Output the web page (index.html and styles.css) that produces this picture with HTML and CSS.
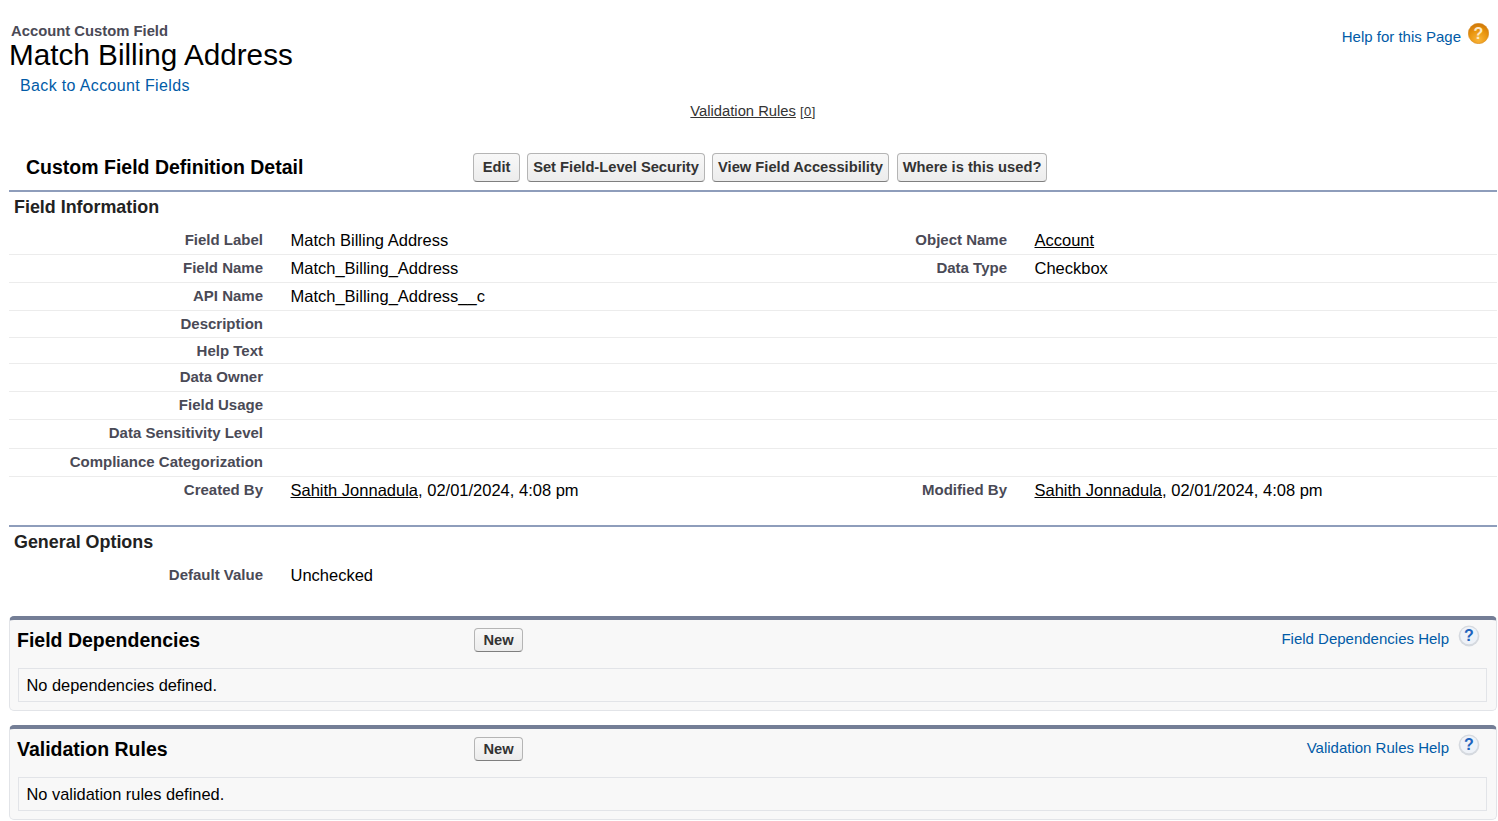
FILE: index.html
```html
<!DOCTYPE html>
<html lang="en">
<head>
    <meta charset="UTF-8">
    <title>Match Billing Address</title>
    <link rel="stylesheet" href="styles.css">
</head>
<body>

<div class="page-header">
    <div class="page-titles">
        <div class="page-type">Account Custom Field</div>
        <h1 class="page-name">Match Billing Address</h1>
        <a class="back-link" href="#">Back to Account Fields</a>
    </div>
    <a class="help-link" href="#">Help for this Page
        <svg class="help-icon" width="21" height="21" viewBox="0 0 21 21">
            <defs>
                <radialGradient id="orange" cx="0.5" cy="0.8" r="0.75">
                    <stop offset="0" stop-color="#f9b53a"/>
                    <stop offset="0.6" stop-color="#e9950f"/>
                    <stop offset="1" stop-color="#d27a08"/>
                </radialGradient>
            </defs>
            <circle cx="10.5" cy="10.5" r="10.2" fill="url(#orange)" stroke="#d98a1e" stroke-width="0.6"/>
            <text x="10.5" y="16" text-anchor="middle" class="help-mark orange-mark">?</text>
        </svg>
    </a>
</div>

<div class="related-links">
    <a href="#">Validation Rules</a> <span class="count">[<u>0</u>]</span>
</div>

<div class="detail-header">
    <h2 class="detail-title">Custom Field Definition Detail</h2>
    <div class="detail-buttons">
        <button class="btn btn-edit">Edit</button>
        <button class="btn btn-security">Set Field-Level Security</button>
        <button class="btn btn-access">View Field Accessibility</button>
        <button class="btn btn-used">Where is this used?</button>
    </div>
</div>

<div class="section first-section">
    <h3 class="section-title">Field Information</h3>
    <div class="field-rows">
        <div class="row h28"><div class="lbl">Field Label</div><div class="val">Match Billing Address</div><div class="lbl">Object Name</div><div class="val"><a href="#">Account</a></div></div>
        <div class="row h28"><div class="lbl">Field Name</div><div class="val">Match_Billing_Address</div><div class="lbl">Data Type</div><div class="val">Checkbox</div></div>
        <div class="row h28"><div class="lbl">API Name</div><div class="val">Match_Billing_Address__c</div><div class="lbl"></div><div class="val"></div></div>
        <div class="row h27"><div class="lbl">Description</div><div class="val"></div><div class="lbl"></div><div class="val"></div></div>
        <div class="row h26"><div class="lbl">Help Text</div><div class="val"></div><div class="lbl"></div><div class="val"></div></div>
        <div class="row h28"><div class="lbl">Data Owner</div><div class="val"></div><div class="lbl"></div><div class="val"></div></div>
        <div class="row h28"><div class="lbl">Field Usage</div><div class="val"></div><div class="lbl"></div><div class="val"></div></div>
        <div class="row h29"><div class="lbl">Data Sensitivity Level</div><div class="val"></div><div class="lbl"></div><div class="val"></div></div>
        <div class="row h28"><div class="lbl">Compliance Categorization</div><div class="val"></div><div class="lbl"></div><div class="val"></div></div>
        <div class="row h28 last"><div class="lbl">Created By</div><div class="val"><a href="#">Sahith Jonnadula</a>, 02/01/2024, 4:08 pm</div><div class="lbl">Modified By</div><div class="val"><a href="#">Sahith Jonnadula</a>, 02/01/2024, 4:08 pm</div></div>
    </div>
</div>

<div class="section second-section">
    <h3 class="section-title">General Options</h3>
    <div class="field-rows">
        <div class="row h28 last"><div class="lbl">Default Value</div><div class="val">Unchecked</div><div class="lbl"></div><div class="val"></div></div>
    </div>
</div>

<div class="list-block">
    <div class="list-head">
        <h3 class="list-title">Field Dependencies</h3>
        <button class="btn btn-new">New</button>
        <a class="list-help" href="#">Field Dependencies Help
            <svg class="q-icon" width="22" height="22" viewBox="0 0 22 22">
                <circle cx="11" cy="11" r="10.4" fill="#d5d9df"/>
                <circle cx="11" cy="10.5" r="8.8" fill="#eef2f8"/>
                <text x="11" y="16" text-anchor="middle" class="help-mark blue-mark">?</text>
            </svg>
        </a>
    </div>
    <div class="list-body">No dependencies defined.</div>
</div>

<div class="list-block">
    <div class="list-head">
        <h3 class="list-title">Validation Rules</h3>
        <button class="btn btn-new">New</button>
        <a class="list-help" href="#">Validation Rules Help
            <svg class="q-icon" width="22" height="22" viewBox="0 0 22 22">
                <circle cx="11" cy="11" r="10.4" fill="#d5d9df"/>
                <circle cx="11" cy="10.5" r="8.8" fill="#eef2f8"/>
                <text x="11" y="16" text-anchor="middle" class="help-mark blue-mark">?</text>
            </svg>
        </a>
    </div>
    <div class="list-body">No validation rules defined.</div>
</div>

</body>
</html>
```

FILE: styles.css
```css
body {
    margin: 0;
    padding: 0 1px 0 9px;
    font-family: "Liberation Sans", Arial, sans-serif;
    font-size: 16px;
    color: #000;
    background: #fff;
    overflow: hidden;
}
a {
    color: #000;
}
h1, h2, h3 {
    margin: 0;
}
.page-header {
    display: flex;
    justify-content: space-between;
    align-items: flex-start;
    padding-top: 23px;
    height: 71px;
}
.page-type {
    font-size: 14.8px;
    font-weight: bold;
    line-height: 17px;
    margin-left: 2px;
    color: #4a4a56;
}
.page-name {
    margin-top: -1px;
    font-size: 29.7px;
    font-weight: normal;
    line-height: 32px;
}
.back-link {
    display: block;
    margin: 5px 0 0 11px;
    font-size: 16px;
    line-height: 20px;
    letter-spacing: 0.36px;
    color: #015ba7;
    text-decoration: none;
}
.help-link {
    display: flex;
    align-items: center;
    gap: 7px;
    margin-right: 8px;
    font-size: 15px;
    color: #015ba7;
    text-decoration: none;
}
.help-icon {
    margin-bottom: 6px;
}
.help-mark {
    font-family: "Liberation Sans", Arial, sans-serif;
    font-weight: bold;
    font-size: 16px;
}
.orange-mark {
    fill: #fde9c6;
}
.blue-mark {
    fill: #1f63bd;
}
.related-links {
    text-align: center;
    font-size: 14.75px;
    line-height: 18px;
    margin-top: 8px;
    color: #333;
}
.related-links a {
    color: #333;
}
.count {
    font-size: 13px;
    letter-spacing: 0.4px;
}
.detail-header {
    display: flex;
    align-items: center;
    margin-top: 24px;
    border-bottom: 2px solid #8e9dbb;
    height: 45px;
    padding-left: 17px;
}
.detail-title {
    width: 447px;
    font-size: 19.5px;
    font-weight: bold;
}
.detail-buttons {
    display: flex;
    gap: 7px;
}
.btn {
    height: 29px;
    padding: 0 0 2px;
    font-family: "Liberation Sans", Arial, sans-serif;
    font-size: 14.7px;
    font-weight: bold;
    color: #333;
    background: linear-gradient(#f8f8f8, #ececec);
    border: 1px solid #b5b5b5;
    border-bottom-color: #7f7f7f;
    border-radius: 4px;
    white-space: nowrap;
}
.btn-edit { width: 47px; }
.btn-security { width: 178px; }
.btn-access { width: 177px; margin-right: 1px; }
.btn-used { width: 150px; }
.btn-new {
    width: 49px;
    height: 24px;
    padding: 0;
}
.section-title {
    font-size: 17.9px;
    font-weight: bold;
    line-height: 22px;
    padding-left: 5px;
    color: #222;
}
.first-section {
    padding-top: 4px;
}
.first-section .section-title {
    margin-bottom: 9px;
}
.row {
    display: grid;
    grid-template-columns: 254px 490px 254px 1fr;
    box-sizing: border-box;
    border-bottom: 1px solid #ececec;
}
.row.last {
    border-bottom: none;
}
.h26 { height: 26px; }
.h27 { height: 27px; }
.h28 { height: 28px; }
.h29 { height: 29px; }
.lbl {
    text-align: right;
    font-size: 15px;
    font-weight: bold;
    color: #4a4a56;
    line-height: 25px;
}
.val {
    padding-left: 27.5px;
    font-size: 16.5px;
    line-height: 26px;
}
.second-section {
    margin-top: 20px;
    border-top: 2px solid #8e9dbb;
    padding-top: 4px;
    height: 85px;
}
.second-section .section-title {
    margin-bottom: 9px;
}
.list-block {
    box-sizing: border-box;
    background: #f8f8f8;
    border: 1px solid #e2e4e8;
    border-top: 4px solid #747e96;
    border-radius: 5px;
    padding: 0 9px 8px 8px;
    margin-bottom: 14px;
    height: 95px;
}
.list-head {
    display: flex;
    align-items: center;
    height: 40px;
    margin: 0 0 8px -1px;
}
.list-title {
    width: 457px;
    font-size: 19.5px;
    font-weight: bold;
}
.list-help {
    display: flex;
    align-items: center;
    gap: 9px;
    margin-left: auto;
    margin-right: 7px;
    padding-bottom: 4px;
    font-size: 15px;
    color: #015ba7;
    text-decoration: none;
}
.q-icon {
    margin-bottom: 4px;
}
.list-body {
    box-sizing: border-box;
    height: 34px;
    padding-left: 7.5px;
    background: #f8f8f8;
    border: 1px solid #e2e4e8;
    font-size: 16.4px;
    line-height: 33px;
}
```
